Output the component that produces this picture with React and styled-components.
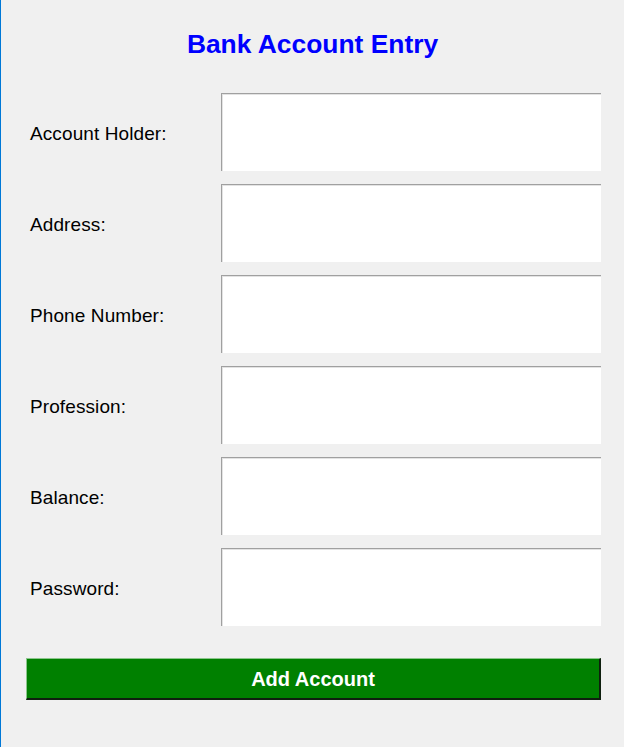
import React from "react";
import styled, { createGlobalStyle } from "styled-components";

const Global = createGlobalStyle`
  html, body { margin: 0; padding: 0; background: #f0f0f0; }
  * { box-sizing: border-box; }
`;

const Window = styled.div`
  width: 624px;
  height: 747px;
  background: #f0f0f0;
  border-left: 1px solid #0078d7;
  font-family: "Liberation Sans", Arial, sans-serif;
  overflow: hidden;
`;

const Title = styled.h1`
  margin: 0;
  padding-top: 29px;
  height: 59px;
  line-height: 30px;
  font-size: 26.4px;
  font-weight: bold;
  color: #0000ff;
  text-align: center;
`;

const Form = styled.div`
  display: grid;
  grid-template-columns: 191px 380px;
  grid-auto-rows: 78px;
  row-gap: 13px;
  margin-top: 34px;
  padding-left: 29px;
`;

const Label = styled.label`
  display: flex;
  align-items: center;
  padding-top: 3px;
  font-size: 19px;
  letter-spacing: 0.1px;
  color: #000;
`;

const Field = styled.input`
  width: 100%;
  height: 100%;
  margin: 0;
  padding: 0 4px;
  background: #fff;
  border: none;
  border-top: 1px solid #a0a0a0;
  border-left: 1px solid #a0a0a0;
  box-shadow: inset 1px 1px 0 #e3e3e3;
  font-family: "Liberation Sans", Arial, sans-serif;
  font-size: 19px;
  outline: none;
`;

const Button = styled.button`
  display: block;
  margin: 32px 0 0 25px;
  width: 575px;
  height: 42px;
  background: #008000;
  border-style: solid;
  border-width: 1px 2px 2px 1px;
  border-color: #8cc68c #0f1f0f #0f1f0f #8cc68c;
  color: #fff;
  font-family: "Liberation Sans", Arial, sans-serif;
  font-size: 20px;
  font-weight: bold;
  padding: 2px 0 0;
  cursor: pointer;
`;

const fields = [
  "Account Holder:",
  "Address:",
  "Phone Number:",
  "Profession:",
  "Balance:",
  "Password:",
];

export default function App() {
  return (
    <Window>
      <Global />
      <Title>Bank Account Entry</Title>
      <Form>
        {fields.map((f) => (
          <React.Fragment key={f}>
            <Label>{f}</Label>
            <Field type={f === "Password:" ? "password" : "text"} />
          </React.Fragment>
        ))}
      </Form>
      <Button>Add Account</Button>
    </Window>
  );
}
